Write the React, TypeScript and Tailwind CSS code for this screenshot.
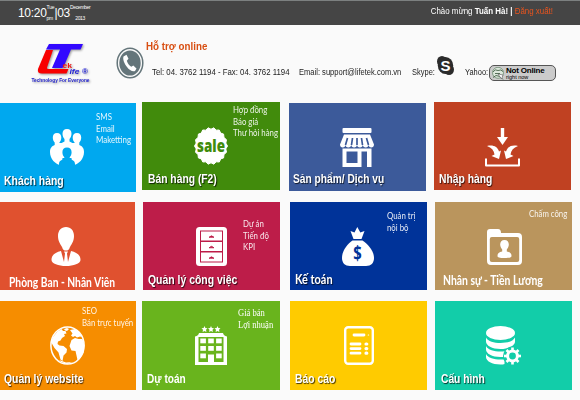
import type { ReactNode } from "react";

const arial = "font-['Liberation_Sans',Arial,sans-serif]";
const lato = "font-['Lato','Noto_Sans',sans-serif]";

const shadow = "[text-shadow:1px_1px_1px_rgba(0,0,0,0.75)]";

type TileProps = {
  box: string;
  title: string;
  titleClass: string;
  icon: ReactNode;
  iconClass: string;
  notes?: string[];
  notesClass?: string;
};

function Tile({ box, title, titleClass, icon, iconClass, notes, notesClass }: TileProps) {
  return (
    <div className={`grid shrink-0 ${box}`}>
      <div className={`col-start-1 row-start-1 self-start justify-self-start ${iconClass}`}>{icon}</div>
      {notes && (
        <div
          className={`col-start-1 row-start-1 origin-left self-start justify-self-start whitespace-nowrap ${notesClass}`}
        >
          {notes.map((n) => (
            <div key={n}>{n}</div>
          ))}
        </div>
      )}
      <div
        className={`col-start-1 row-start-1 origin-left self-end justify-self-start leading-[14px] font-bold whitespace-nowrap text-white ${titleClass}`}
      >
        {title}
      </div>
    </div>
  );
}

function PeopleIcon({ cut }: { cut: string }) {
  return (
    <svg className="block h-[38px] w-[34px]" viewBox="0 0 34 38" fill="#fff">
      <path d="M17 0c3 0 4.500 2 4.500 4.700 0 2.300-.9 4-2 5.300v2.500c2 .8 4 1.800 4.500 4.500H10c.5-2.700 2.500-3.700 4.500-4.500V10c-1.100-1.300-2-3-2-5.300C12.500 2 14 0 17 0z" />
      <path d="M7 4c2.900 0 4.300 2 4.300 4.400 0 2.200-.8 3.800-1.900 5V16c1.500.8 3.600 1 3.600 4l-1 17C5 35 0 30 0 23c0-4 2-6 4.700-7v-2.600c-1.100-1.200-1.900-2.800-1.900-5C2.800 6 4.100 4 7 4z" />
      <path d="M27 4c-2.900 0-4.300 2-4.300 4.400 0 2.200.8 3.800 1.900 5V16c-1.500.8-3.600 1-3.600 4l1 17c7-2 12-7 12-14 0-4-2-6-4.700-7v-2.600c1.100-1.200 1.900-2.800 1.900-5C31.200 6 29.900 4 27 4z" />
      <path d="M9 14h16v15H9z" />
      <path
        fill={cut}
        d="M17 18.500c3 0 4.600 2.100 4.600 4.700 0 2.200-.8 3.800-1.900 5v1.800c3 .8 5.300 2 5.300 5v3.500H9V35c0-3 2.300-4.200 5.300-5v-1.800c-1.100-1.200-1.900-2.800-1.900-5 0-2.600 1.600-4.700 4.600-4.700z"
      />
    </svg>
  );
}

function SaleIcon() {
  const pts: string[] = [];
  for (let i = 0; i < 36; i++) {
    const a = (i * Math.PI) / 18;
    const k = i % 2 ? 0.91 : 1;
    pts.push(`${(17 + 16.5 * k * Math.cos(a)).toFixed(1)},${(19 + 18.5 * k * Math.sin(a)).toFixed(1)}`);
  }
  return (
    <svg className="block h-[38px] w-[34px] overflow-visible" viewBox="0 0 34 38">
      <polygon points={pts.join(" ")} fill="#fff" stroke="#fff" strokeLinejoin="round" />
      <text
        x="3"
        y="24.500"
        textLength="28"
        lengthAdjust="spacingAndGlyphs"
        className="font-['Open_Sans',sans-serif] text-[18px] font-extrabold"
        fill="#418b0c"
      >
        sale
      </text>
    </svg>
  );
}

function ShopIcon() {
  return (
    <svg className="block h-[39px] w-[34px]" viewBox="0 0 34 39" fill="#fff">
      <rect x="2.500" y="0" width="29" height="5" rx="1" />
      <path d="M4 6.500h26l4 10c0 2-1.200 3-2.700 3s-2.800-1-2.800-3c0 2-1.200 3-2.800 3s-2.900-1-2.900-3c0 2-1.200 3-2.900 3s-2.900-1-2.900-3c0 2-1.200 3-2.900 3s-2.900-1-2.900-3c0 2-1.200 3-2.900 3S5.500 18.500 5.500 16.500c0 2-1.200 3-2.800 3S0 18.500 0 16.500z" />
      <path
        d="M7.500 10l-2 7M12.500 10l-1 7M17 10v7M21.500 10l1 7M26.500 10l2 7"
        stroke="#3c5a9a"
        strokeWidth="1.700"
        fill="none"
      />
      <path fillRule="evenodd" d="M2.500 20.500h29V39H27V23.500h-5.500V39h-19zM6.500 23.500v11.500h11V23.500z" />
    </svg>
  );
}

function ImportIcon() {
  return (
    <svg className="block h-[39px] w-[35px]" viewBox="0 0 35 39" fill="#fff">
      <path d="M15.800 0h3.400v9H23l-5.500 8L12 9h3.800z" />
      <path d="M2 18c6-1.500 10.500.5 12 5.500l2-1-2 8.500-7.500-3 3-1.500C9 22.500 6.500 19.500 2 18z" />
      <path d="M33 18c-6-1.500-10.500.5-12 5.500l-2-1 2 8.500 7.500-3-3-1.500c.5-4 3-7 7.500-8.500z" />
      <path d="M1 30.500v7h33v-7" fill="none" stroke="#fff" strokeWidth="2" strokeLinejoin="round" />
    </svg>
  );
}

function PersonIcon() {
  return (
    <svg className="block h-[39px] w-[30px]" viewBox="0 0 30 39" fill="#fff">
      <path d="M15 0c5 0 8 3.800 8 9 0 5-2.300 8-4 11-.8 1.500-.7 3.500-4 3.500S11.800 21.500 11 20C9.300 17 7 14 7 9c0-5.200 3-9 8-9z" />
      <path d="M10 24l3 11 1-8.500-1-2h4l-1 2 1 8.500 3-11c5.500 1.500 9.500 3.500 9.500 9 0 3.500-7 6-14.500 6S.5 36.500.5 33C.5 27.500 4.500 25.500 10 24z" />
    </svg>
  );
}

function CabinetIcon() {
  return (
    <svg className="block h-[39px] w-[31px]" viewBox="0 0 31 39">
      <rect x="0" y="0" width="31" height="39" rx="3.500" fill="#fff" />
      {[4, 14.5, 25].map((y) => (
        <g key={y}>
          <rect x="4.500" y={y} width="22" height="10" fill="#fff" stroke="#bd1d49" />
          <path d={`M13 ${y + 6.3}q2.500-3 5 0z`} fill="#bd1d49" stroke="#bd1d49" strokeWidth=".8" />
        </g>
      ))}
    </svg>
  );
}

function MoneyIcon() {
  return (
    <svg className="block h-[39px] w-[32px] overflow-visible" viewBox="0 0 32 39" fill="#fff">
      <path d="M8.500 4l4 1.500L15.300 0l3 5.500L22.500 4 19.500 12h-8z" />
      <path d="M10.500 13.500h10c5 3.500 11.500 10 11.500 17.500 0 5-3 8-8 8H8c-5 0-8-3-8-8 0-7.500 5.500-14 10.500-17.500z" />
      <text
        x="15.500"
        y="33"
        textAnchor="middle"
        className="font-['Open_Sans',sans-serif] text-[19px] font-bold"
        fill="#003399"
        transform="translate(3.400 0) scale(.78 1)"
      >
        $
      </text>
    </svg>
  );
}

function FolderIcon() {
  return (
    <svg className="block h-[36px] w-[35px]" viewBox="0 0 35 36" fill="#fff">
      <path d="M0 3q0-3 3-3h8q3 0 3 4h17q4 0 4 4v24q0 4-4 4H4q-4 0-4-4z" />
      <rect x="2.800" y="8" width="29.400" height="25" rx="2" fill="#ba955d" />
      <path d="M17.500 11c3 0 4.500 2.200 4.300 5-.2 2-1 3-2 4.500v2c3 .8 4.700 1.500 4.700 4.500 0 1.500-2 2-7 2s-7-.5-7-2c0-3 1.700-3.700 4.700-4.500v-2c-1-1.500-1.800-2.500-2-4.500-.2-2.800 1.300-5 4.300-5z" />
    </svg>
  );
}

function GlobeIcon() {
  return (
    <svg className="block h-[39px] w-[35px]" viewBox="0 0 35 39">
      <ellipse cx="17.500" cy="19.500" rx="16.600" ry="18.600" fill="none" stroke="#fff" strokeWidth="1.500" />
      <g fill="#fff">
        <path d="M3 11L7.500 5.500l4-2.500 1.500 2 2.500 0 1 2.500-2.500.5 1 2-3 2-1.500 2.500-2.500 1-.5 2.500 2 1.500 4 .5 3.500 3-.5 3.500-3 3-1 5.500-2-1.500-2-7-4-4.500L1 16z" />
        <path d="M14 3l3-1 2 1-2 2-2-.5zM20 4l5-1 4 3 3 5-2-.5-3 1-2-1.500-2 1-2-1.500 1.500-2z" />
        <path d="M21.500 14l3.500-2 3.500 1 4 0 2 6.500-1 7-3 5-3 2.500-1-4.500-1-4.500-4-.5-2-4.500z" />
        <path d="M9 34l7 2.500 6-.5-5 2-6-2z" />
      </g>
    </svg>
  );
}

function HotelIcon() {
  return (
    <svg className="block h-[39px] w-[32px]" viewBox="0 0 32 39" fill="#fff">
      {[9.5, 16, 22.5].map((x) => (
        <path
          key={x}
          d={`M${x} 0l.9 1.900 2.100.3-1.500 1.500.4 2.300-1.900-1.100L${x - 1.9} 6l.4-2.300L${x - 3} 2.200l2.100-.3z`}
        />
      ))}
      <path fillRule="evenodd" d="M4 7h24q.5 2.500 4 3.500V39H0V10.500Q3.500 9.500 4 7zM3.500 11v25H13v-7.500h6V36h9.500V11z" />
      {[12.5, 20, 27.5].map((y) =>
        [5.3, 13.2, 21.1].map((x) => (
          <rect key={`${x}-${y}`} x={x} y={y} width="5.600" height={y === 27.5 && x === 13.2 ? 0 : 4.8} />
        )),
      )}
    </svg>
  );
}

function ReportIcon() {
  return (
    <svg className="block h-[39px] w-[30px]" viewBox="0 0 30 39">
      <rect x="1.200" y="1.200" width="27.600" height="36.600" rx="3" fill="none" stroke="#fff" strokeWidth="2.400" />
      <g stroke="#fff" strokeWidth="2.800" strokeLinecap="round">
        <path d="M10 9h10M7 18h9M7 22.600h9M7 27.200h9" />
        <path d="M22 18h.8M22 22.600h.8M22 27.200h.8" strokeWidth="3.200" />
        <path d="M24.300 9h.3" strokeWidth="1.200" />
      </g>
    </svg>
  );
}

function DatabaseIcon() {
  return (
    <svg className="block h-[39px] w-[35px]" viewBox="0 0 35 39" fill="#fff">
      <ellipse cx="14.500" cy="7" rx="14.500" ry="7" />
      <path d="M0 11.500c2 4 8 5.500 14.500 5.500S27 15.500 29 11.500v4c0 4-6 7.500-14.500 7.500S0 19.500 0 15.500z" />
      <path d="M0 20c2 4 8 5.500 14.500 5.500 3 0 5.500-.3 7-1v5.500c-2 .8-4 1-7 1C6 31 0 27.500 0 23.500z" />
      <path d="M0 28c2 4 8 5.500 14.500 5.500h4V38c-1 .5-2 .5-4 .5C6 38.500 0 35 0 31z" />
      <circle cx="26.500" cy="30" r="9.500" fill="#12cda9" />
      <circle cx="26.500" cy="30" r="4.900" fill="none" stroke="#fff" strokeWidth="3" />
      {[0, 45, 90, 135, 180, 225, 270, 315].map((a) => (
        <rect key={a} x="25.200" y="21.500" width="2.600" height="3.500" transform={`rotate(${a} 26.500 30)`} />
      ))}
    </svg>
  );
}

function Logo() {
  return (
    <svg
      className="mt-[17px] ml-[30px] block h-[42px] w-[64px] shrink-0 overflow-visible [filter:drop-shadow(1px_1px_1px_rgba(0,0,0,0.4))]"
      viewBox="30 42 64 42"
    >
      <path d="M46 50h7l-6 17.500q-.5 1.500 1.500 1.500h20l-2 4.500H42q-5 0-4-4.500z" fill="#f80000" />
      <path d="M49 44h34l-2.500 5.500H71L63.500 67q-.5 1-2 1H52l8-18.500H46z" fill="#3208ff" />
      <g className="font-['Liberation_Sans',Arial,sans-serif] font-bold">
        <text x="62.500" y="68" fontSize="6.500" textLength="9.500" lengthAdjust="spacingAndGlyphs" fill="#f01818">
          ek
        </text>
        <text
          x="69.500"
          y="74"
          fontSize="6.500"
          textLength="18.500"
          lengthAdjust="spacingAndGlyphs"
          fontStyle="italic"
          fill="#2020d8"
        >
          ife ®
        </text>
        <text x="31.500" y="82" fontSize="5.500" textLength="58" lengthAdjust="spacingAndGlyphs" fill="#2222cc">
          Technology For Everyone
        </text>
      </g>
    </svg>
  );
}

function PhoneIcon() {
  return (
    <svg className="mt-[22px] ml-[22px] block h-[32px] w-[28px] shrink-0" viewBox="0 0 28 32">
      <ellipse cx="14" cy="16" rx="12.800" ry="14.800" fill="none" stroke="#64757a" strokeWidth="1.500" />
      <ellipse cx="14" cy="16" rx="10.700" ry="12.600" fill="#64757a" />
      <path
        d="M7.500 9.500l3-1.700 2 4-1.700 2q1.500 4.500 4.500 6l2-1.300 3.200 3-1.500 2.500c-2 1.300-6-1-8-4-2.500-3.300-4.500-7.500-3.500-10.500z"
        fill="#fff"
      />
    </svg>
  );
}

function SkypeIcon() {
  return (
    <svg className="block h-[19px] w-[17px] overflow-visible" viewBox="0 0 17 19">
      <g fill="#2b2b2b">
        <ellipse cx="8.500" cy="9.500" rx="7.700" ry="8.600" />
        <ellipse cx="5" cy="5.400" rx="5" ry="5.400" />
        <ellipse cx="12" cy="13.600" rx="5" ry="5.400" />
      </g>
      <text
        x="8.500"
        y="15"
        textAnchor="middle"
        fill="#fff"
        className="font-['Liberation_Sans',Arial,sans-serif] text-[15px] font-bold"
      >
        S
      </text>
    </svg>
  );
}

function YahooBadge() {
  return (
    <div className="flex h-[16px] w-[67px] shrink-0 items-center rounded-[5px] border border-[#555] bg-[#cbcbcb]">
      <svg className="ml-px block h-[13px] w-[14px] shrink-0" viewBox="0 0 14 13">
        <circle cx="7" cy="5.800" r="5.500" fill="#dce8dc" stroke="#6c8a70" strokeWidth=".8" />
        <path d="M2 5q2-3.500 5-1.500 3-1.500 5 1M4 6.500h5M2 10.500l3-2 4 1 3 3" stroke="#47634b" fill="none" strokeWidth=".9" />
        <path d="M7 7l5 1-1.500 4z" fill="#fff" stroke="#555" strokeWidth=".6" />
      </svg>
      <div className="ml-px whitespace-nowrap text-black">
        <div className="text-[8px] leading-[8px] font-bold tracking-[-0.200px]">Not Online</div>
        <div className="text-[5.500px] leading-[5px]">right now</div>
      </div>
    </div>
  );
}

const note = `${lato} text-[9px] leading-[11.700px] text-white/90`;

export default function App() {
  return (
    <div className={`flex h-[400px] w-[580px] flex-col overflow-hidden bg-[#fafafa] ${arial}`}>
      <header className="flex h-[25px] shrink-0 items-start justify-between border-t border-[#7c8080] bg-[#454545] text-white">
        <div className="ml-[18px] flex items-start whitespace-nowrap">
          <span className="mt-[5px] text-[12px] leading-[14px] tracking-[-0.300px]">10:20</span>
          <span className="mt-[3px] flex h-[17px] flex-col justify-between text-[5px] leading-[6px] tracking-[-0.200px]">
            <span>Tue</span>
            <span>pm</span>
          </span>
          <span className="mt-[5px] text-[12px] leading-[14px] tracking-[-0.300px]">|03</span>
          <span className="mt-[3px] flex h-[17px] flex-col items-center justify-between text-[5px] leading-[6px] tracking-[-0.350px]">
            <span>December</span>
            <span>2013</span>
          </span>
        </div>
        <div className="mt-[4px] mr-[27px] origin-right scale-x-[0.88] text-[9px] leading-[13px] whitespace-nowrap">
          Chào mừng <b>Tuấn Hà! |</b> <span className="text-[#e8541e]">Đăng xuất!</span>
        </div>
      </header>

      <section className="flex h-[76px] shrink-0">
        <Logo />
        <PhoneIcon />
        <div className="ml-[2px] flex flex-col">
          <h1 className="mt-[15px] origin-left scale-x-[0.89] text-[11px] leading-[13px] font-bold text-[#d84f13]">
            Hỗ trợ online
          </h1>
          <div className="ml-[6px] flex h-[30px] items-start text-[8.500px] leading-[10px] whitespace-nowrap text-[#222]">
            <span className="mt-[14px] w-[147px] origin-left scale-x-[0.92]">
              Tel: 04. 3762 1194 - Fax: 04. 3762 1194
            </span>
            <span className="mt-[14px] w-[113px] origin-left scale-x-[0.89]">Email: support@lifetek.com.vn</span>
            <span className="mt-[14px] w-[25px] origin-left scale-x-[0.88]">Skype:</span>
            <span className="mt-[3px] w-[28px]">
              <SkypeIcon />
            </span>
            <span className="mt-[14px] w-[24px] origin-left scale-x-[0.88]">Yahoo:</span>
            <div className="mt-[12px]">
              <YahooBadge />
            </div>
          </div>
        </div>
      </section>

      <main className="flex flex-col">
        <div className="flex h-[100px] items-start">
          <Tile
            box="mt-[2px] h-[89px] w-[136px] bg-[#00a8ef]"
            title="Khách hàng"
            titleClass={`ml-[4px] mb-[4px] scale-x-[0.87] text-[12px] ${shadow}`}
            icon={<PeopleIcon cut="#00a8ef" />}
            iconClass="ml-[50px] mt-[26px]"
            notes={["SMS", "Email", "Maketting"]}
            notesClass={`${note} ml-[96px] mt-[8px] scale-x-[0.88]`}
          />
          <Tile
            box="mt-[1px] ml-[6px] h-[88px] w-[138px] bg-[#418b0c]"
            title="Bán hàng (F2)"
            titleClass={`ml-[6px] mb-[4px] scale-x-[0.86] text-[12px] ${shadow}`}
            icon={<SaleIcon />}
            iconClass="ml-[52px] mt-[25px]"
            notes={["Hợp đồng", "Báo giá", "Thư hỏi hàng"]}
            notesClass={`${note} ml-[91px] mt-[2px] scale-x-[0.87]`}
          />
          <Tile
            box="mt-[2px] ml-[9px] h-[88px] w-[137px] bg-[#3c5a9a]"
            title="Sản phẩm/ Dịch vụ"
            titleClass={`ml-[4px] mb-[5px] scale-x-[0.85] text-[12px] ${shadow}`}
            icon={<ShopIcon />}
            iconClass="ml-[51px] mt-[25px]"
          />
          <Tile
            box="mt-[1px] ml-[8px] h-[88px] w-[137px] bg-[#c04122]"
            title="Nhập hàng"
            titleClass={`ml-[5px] mb-[4px] scale-x-[0.86] text-[12px] ${shadow}`}
            icon={<ImportIcon />}
            iconClass="ml-[51px] mt-[26px]"
          />
        </div>

        <div className="flex h-[100px] items-start">
          <Tile
            box="mt-[1px] h-[88px] w-[135px] bg-[#e0512f]"
            title="Phòng Ban - Nhân Viên"
            titleClass={`${lato} ml-[9px] mb-[1px] scale-x-[0.79] text-[13px]`}
            icon={<PersonIcon />}
            iconClass="ml-[51px] mt-[25px]"
          />
          <Tile
            box="mt-[1px] ml-[8px] h-[88px] w-[137px] bg-[#bd1d49]"
            title="Quản lý công việc"
            titleClass={`ml-[5px] mb-[3px] scale-x-[0.87] text-[12px] ${shadow}`}
            icon={<CabinetIcon />}
            iconClass="ml-[53px] mt-[25px]"
            notes={["Dự án", "Tiến độ", "KPI"]}
            notesClass={`${note} ml-[100px] mt-[16px] scale-x-[0.87]`}
          />
          <Tile
            box="mt-[1px] ml-[10px] h-[88px] w-[137px] bg-[#003399]"
            title="Kế toán"
            titleClass={`${lato} ml-[5px] mb-[4px] scale-x-[0.84] text-[13px] ${shadow}`}
            icon={<MoneyIcon />}
            iconClass="ml-[52px] mt-[25px]"
            notes={["Quản trị", "nội bộ"]}
            notesClass={`${note} ml-[97px] mt-[8px] scale-x-[0.87]`}
          />
          <Tile
            box="mt-[1px] ml-[8px] h-[88px] w-[137px] bg-[#ba955d]"
            title="Nhân sự - Tiền Lương"
            titleClass={`${lato} ml-[8px] mb-[3px] scale-x-[0.8] text-[13px]`}
            icon={<FolderIcon />}
            iconClass="ml-[52px] mt-[27px]"
            notes={["Chấm công"]}
            notesClass={`${note} ml-[94px] mt-[6px] scale-x-[0.865]`}
          />
        </div>

        <div className="flex h-[95px] items-start">
          <Tile
            box="h-[89px] w-[136px] bg-[#f68d00]"
            title="Quản lý website"
            titleClass={`ml-[4px] mb-[4px] scale-x-[0.87] text-[12px] ${shadow}`}
            icon={<GlobeIcon />}
            iconClass="ml-[50px] mt-[25px]"
            notes={["SEO", "Bán trực tuyến"]}
            notesClass={`${note} ml-[82px] mt-[4px] scale-x-[0.87]`}
          />
          <Tile
            box="ml-[6px] h-[89px] w-[138px] bg-[#69b41d]"
            title="Dự toán"
            titleClass="ml-[5px] mb-[4px] scale-x-[0.84] text-[12px]"
            icon={<HotelIcon />}
            iconClass="ml-[53px] mt-[25px]"
            notes={["Giá bán", "Lợi nhuận"]}
            notesClass="ml-[96px] mt-[7px] scale-x-[0.9] font-['Liberation_Serif',serif] text-[9.500px] leading-[11.700px] text-white"
          />
          <Tile
            box="ml-[10px] h-[89px] w-[137px] bg-[#ffcb00]"
            title="Báo cáo"
            titleClass={`ml-[5px] mb-[4px] scale-x-[0.865] text-[12px] ${shadow}`}
            icon={<ReportIcon />}
            iconClass="ml-[54px] mt-[25px]"
          />
          <Tile
            box="ml-[8px] h-[89px] w-[137px] bg-[#12cda9]"
            title="Cấu hình"
            titleClass={`ml-[6px] mb-[4px] scale-x-[0.855] text-[12px] ${shadow}`}
            icon={<DatabaseIcon />}
            iconClass="ml-[51px] mt-[25px]"
          />
        </div>
      </main>
    </div>
  );
}
